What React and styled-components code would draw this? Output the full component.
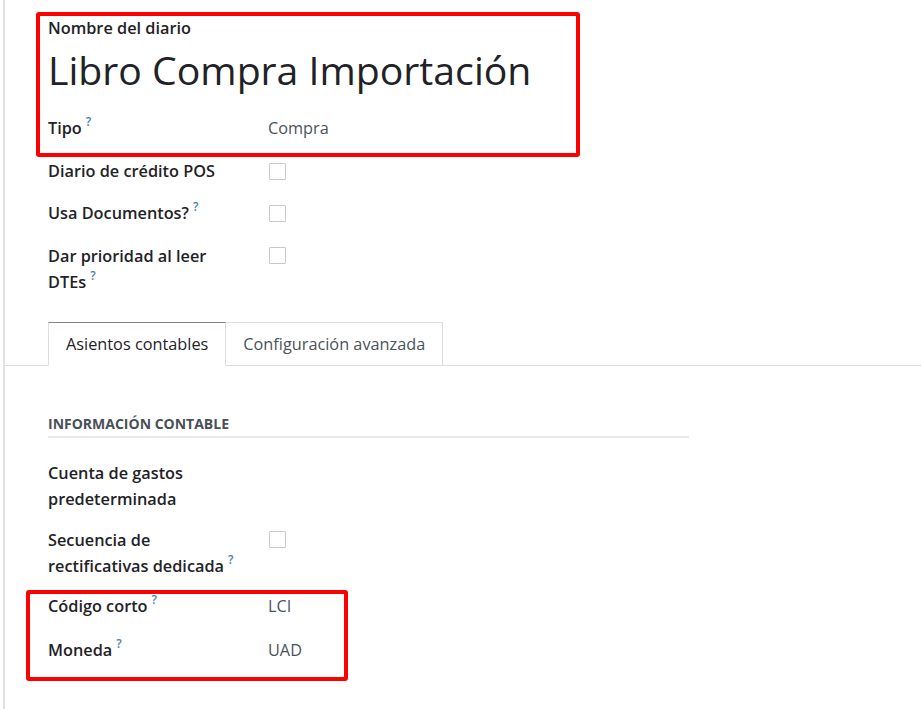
import React from "react";
import styled, { createGlobalStyle } from "styled-components";

const GlobalStyle = createGlobalStyle`
  html, body { margin: 0; padding: 0; background: #ffffff; }
  body { font-family: "Open Sans", "Noto Sans", sans-serif; color: #212529; }
  * { box-sizing: border-box; }
`;

const Page = styled.div`
  padding-left: 3px;
  width: 921px;
  height: 709px;
  overflow: hidden;
`;

const Sheet = styled.div`
  border-left: 2px solid #dee2e6;
  height: 100%;
  padding-top: 12px;
`;

const Content = styled.div`
  padding-left: 43px;
`;

const Highlight = styled.div`
  border: 4px solid #ff0000;
  border-radius: 3px;
  width: ${(p) => p.$w}px;
  margin-left: ${(p) => -p.$inset - 4}px;
  padding-left: ${(p) => p.$inset}px;
  padding-bottom: ${(p) => p.$pb}px;
  margin-top: ${(p) => p.$mt || 0}px;
`;

const FieldCaption = styled.div`
  font-size: 16.3px;
  font-weight: 600;
  line-height: 24px;
  color: #1f2327;
`;

const Title = styled.div`
  font-size: 39.2px;
  font-weight: 400;
  line-height: 56px;
  margin-top: 2px;
  color: #1f2327;
`;

const Row = styled.div`
  display: grid;
  grid-template-columns: 220px 1fr;
  align-items: start;
  margin-top: ${(p) => p.$mt || 0}px;
`;

const Label = styled.div`
  font-size: 16.3px;
  font-weight: 600;
  line-height: ${(p) => p.$lh || 26}px;
  color: #1f2327;
  padding-right: 12px;
`;

const Value = styled.div`
  font-size: 16.3px;
  line-height: ${(p) => p.$lh || 26}px;
  color: #4b525a;
`;

const Help = styled.sup`
  font-size: 12px;
  font-weight: 600;
  color: #4f7fb0;
  margin-left: 4px;
  vertical-align: top;
  position: relative;
  top: -6px;
`;

const Checkbox = styled.span`
  display: block;
  width: 17px;
  height: 17px;
  border: 1px solid #c9c9c9;
  border-radius: 1px;
  margin-top: ${(p) => p.$mt || 5}px;
  margin-left: 1px;
`;

const TabBar = styled.div`
  display: flex;
  margin-top: 27px;
  padding-left: 43px;
  border-bottom: 1px solid #dcdde1;
`;

const Tab = styled.div`
  height: 44px;
  padding: 0 17px;
  display: flex;
  align-items: center;
  font-size: 16.3px;
  color: ${(p) => (p.$active ? "#1f2327" : "#4b525a")};
  border: 1px solid #dcdde1;
  border-left-width: ${(p) => (p.$first ? 1 : 0)}px;
  border-top-color: ${(p) => (p.$active ? "#8f7d8c" : "#dcdde1")};
  border-bottom-color: ${(p) => (p.$active ? "#ffffff" : "#dcdde1")};
  background: #ffffff;
  margin-bottom: -1px;
`;

const SectionTitle = styled.div`
  margin-top: 47px;
  width: 641px;
  font-size: 14px;
  font-weight: 700;
  line-height: 22px;
  color: #495057;
  text-transform: uppercase;
  padding-bottom: 1px;
  border-bottom: 2px solid #e7e9ec;
`;

export default function App() {
  return (
    <>
      <GlobalStyle />
      <Page>
        <Sheet>
          <Content>
            <Highlight $w={544} $inset={8} $pb={12}>
              <FieldCaption>Nombre del diario</FieldCaption>
              <Title>Libro Compra Importación</Title>
              <Row $mt={17}>
                <Label>
                  Tipo<Help>?</Help>
                </Label>
                <Value>Compra</Value>
              </Row>
            </Highlight>
            <Row $mt={1}>
              <Label>Diario de crédito POS</Label>
              <Checkbox $mt={5} />
            </Row>
            <Row $mt={16}>
              <Label>
                Usa Documentos?<Help>?</Help>
              </Label>
              <Checkbox $mt={5} />
            </Row>
            <Row $mt={17}>
              <Label>
                Dar prioridad al leer
                <br />
                DTEs<Help>?</Help>
              </Label>
              <Checkbox $mt={4} />
            </Row>
          </Content>
          <TabBar>
            <Tab $active $first>
              Asientos contables
            </Tab>
            <Tab>Configuración avanzada</Tab>
          </TabBar>
          <Content>
            <SectionTitle>Información contable</SectionTitle>
            <Row $mt={22}>
              <Label>
                Cuenta de gastos
                <br />
                predeterminada
              </Label>
            </Row>
            <Row $mt={15}>
              <Label>
                Secuencia de
                <br />
                rectificativas dedicada<Help>?</Help>
              </Label>
              <Checkbox $mt={4} />
            </Row>
            <Highlight $w={322} $inset={18} $pb={15} $mt={11}>
              <Row>
                <Label $lh={24}>
                  Código corto<Help>?</Help>
                </Label>
                <Value $lh={24}>LCI</Value>
              </Row>
              <Row $mt={20}>
                <Label $lh={24}>
                  Moneda<Help>?</Help>
                </Label>
                <Value $lh={24}>UAD</Value>
              </Row>
            </Highlight>
          </Content>
        </Sheet>
      </Page>
    </>
  );
}
